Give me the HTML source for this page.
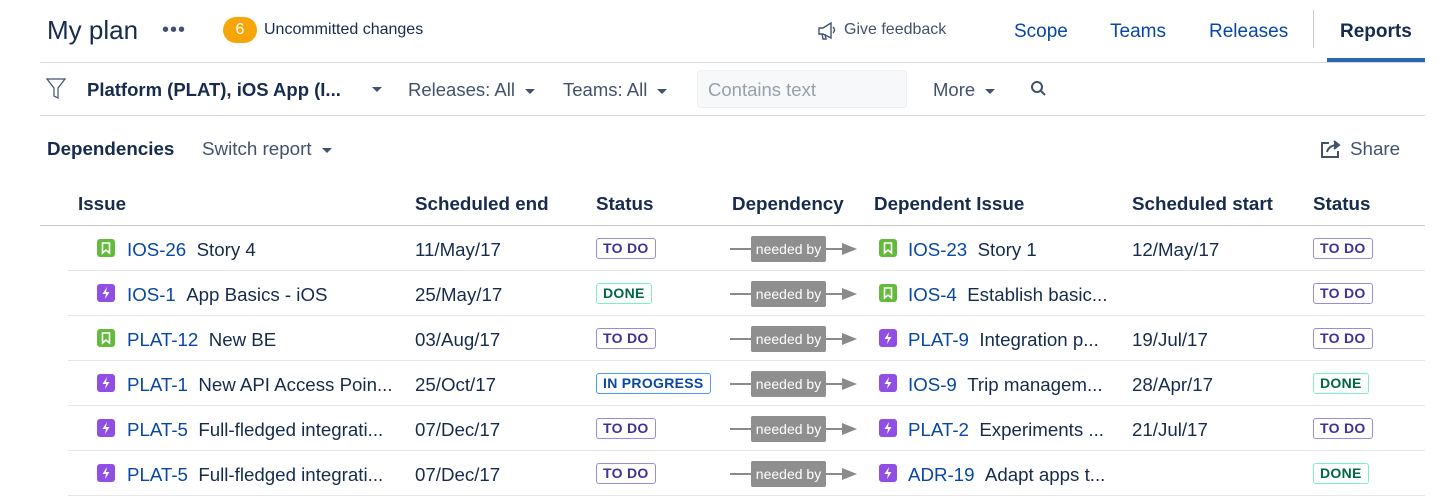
<!DOCTYPE html>
<html><head><meta charset="utf-8"><style>
*{margin:0;padding:0;box-sizing:border-box}
body{width:1456px;height:500px;overflow:hidden;background:#fff;font-family:"Liberation Sans",sans-serif;color:#172b4d;position:relative}
.a{position:absolute;white-space:nowrap}
.line{position:absolute;height:1px;background:#d8d8d8}
.blue{color:#0747a6}
.h{font-weight:bold;font-size:18.8px;color:#172b4d}
.caret{display:inline-block;width:0;height:0;border-left:5px solid transparent;border-right:5px solid transparent;border-top:5px solid #42526e;vertical-align:middle;margin-left:10px}
.loz{position:absolute;font-size:14px;font-weight:bold;border:1px solid;border-radius:3px;padding:1px 6px;line-height:17px;letter-spacing:.3px}
.todo{color:#403294;border-color:#998dd9}
.done{color:#006644;border-color:#79f2c0}
.prog{color:#0747a6;border-color:#4c9aff}
.ic{position:absolute;width:18px;height:18px;border-radius:3px}
.st{background:#63ba3c}
.ep{background:#904ee2}
.dep{position:absolute;width:128px;height:26px}
.t{font-size:18.7px}
</style></head><body>
<div class="a" style="left:47px;top:15px;font-size:26px">My plan</div>
<div class="a" style="left:162px;top:19px;font-size:20px;color:#42526e;letter-spacing:1px">•••</div>
<div class="a" style="left:223px;top:17px;width:34px;height:26px;border-radius:13px;background:#f6a609;color:#fff;font-size:16px;text-align:center;line-height:26px">6</div>
<div class="a" style="left:264px;top:21px;font-size:16px;color:#172b4d">Uncommitted changes</div>
<svg class="a" style="left:817px;top:21px" width="20" height="20" viewBox="0 0 20 20" fill="none" stroke="#42526e" stroke-width="1.4"><path d="M2 7h4l8-5v15l-8-4H2z M5 13l1 5h3l-1-5 M16 6q3 3 0 6"/></svg>
<div class="a" style="left:844px;top:21px;font-size:16px;color:#42526e">Give feedback</div>
<div class="a blue" style="left:1014px;top:21px;font-size:19px">Scope</div>
<div class="a blue" style="left:1110px;top:21px;font-size:19px">Teams</div>
<div class="a blue" style="left:1209px;top:21px;font-size:19px">Releases</div>
<div class="a" style="left:1313px;top:10px;width:1px;height:38px;background:#ccc"></div>
<div class="a" style="left:1340px;top:21px;font-size:19px;font-weight:bold">Reports</div>
<div class="line" style="left:40px;top:62px;width:1385px"></div>
<div class="a" style="left:1327px;top:58px;width:98px;height:4px;background:#2b65b3"></div>

<svg class="a" style="left:46px;top:78px" width="20" height="22" viewBox="0 0 20 22" fill="none" stroke="#42526e" stroke-width="1.2"><path d="M1 1h18l-7 9v10l-4-2v-8z"/></svg>
<div class="a" style="left:87px;top:79px;font-size:18.5px;font-weight:bold">Platform (PLAT), iOS App (I...</div>
<div class="a" style="left:362px;top:80px;height:20px;line-height:20px"><span class="caret"></span></div>
<div class="a" style="left:408px;top:79px;font-size:18.5px;color:#42526e">Releases: All<span class="caret"></span></div>
<div class="a" style="left:563px;top:79px;font-size:18.5px;color:#42526e">Teams: All<span class="caret"></span></div>
<div class="a" style="left:697px;top:70px;width:210px;height:38px;background:#f7f8f9;border:1px solid #eef0f2;border-radius:3px;font-size:18.5px;color:#97a0af;padding:8px 10px">Contains text</div>
<div class="a" style="left:933px;top:79px;font-size:18.5px;color:#42526e">More<span class="caret"></span></div>
<svg class="a" style="left:1030px;top:80px" width="18" height="18" viewBox="0 0 18 18" fill="none" stroke="#42526e" stroke-width="2"><circle cx="7" cy="7" r="5"/><path d="M11 11l4 4"/></svg>
<div class="line" style="left:40px;top:115px;width:1385px"></div>

<div class="a" style="left:47px;top:138px;font-size:18.8px;font-weight:bold">Dependencies</div>
<div class="a" style="left:202px;top:138px;font-size:18.8px;color:#42526e">Switch report<span class="caret"></span></div>
<svg class="a" style="left:1320px;top:139px" width="22" height="20" viewBox="0 0 22 20" fill="none" stroke="#42526e" stroke-width="2"><path d="M9 4H2v14h16v-6"/><path d="M7 13q2-7 11-7" /><path d="M14 2l5 4-5 4" fill="#42526e"/></svg>
<div class="a" style="left:1350px;top:138px;font-size:18.8px;color:#42526e">Share</div>

<div class="a h" style="left:78px;top:193px">Issue</div>
<div class="a h" style="left:415px;top:193px">Scheduled end</div>
<div class="a h" style="left:596px;top:193px">Status</div>
<div class="a h" style="left:732px;top:193px">Dependency</div>
<div class="a h" style="left:874px;top:193px">Dependent Issue</div>
<div class="a h" style="left:1132px;top:193px">Scheduled start</div>
<div class="a h" style="left:1313px;top:193px">Status</div>
<div class="line" style="left:40px;top:225px;width:1385px;background:#c8c8c8"></div>

<div id="rows"></div>
<script>
var R=[
['st','IOS-26','Story 4','11/May/17','todo','TO DO','st','IOS-23','Story 1','12/May/17','todo','TO DO'],
['ep','IOS-1','App Basics - iOS','25/May/17','done','DONE','st','IOS-4','Establish basic...','','todo','TO DO'],
['st','PLAT-12','New BE','03/Aug/17','todo','TO DO','ep','PLAT-9','Integration p...','19/Jul/17','todo','TO DO'],
['ep','PLAT-1','New API Access Poin...','25/Oct/17','prog','IN PROGRESS','ep','IOS-9','Trip managem...','28/Apr/17','done','DONE'],
['ep','PLAT-5','Full-fledged integrati...','07/Dec/17','todo','TO DO','ep','PLAT-2','Experiments ...','21/Jul/17','todo','TO DO'],
['ep','PLAT-5','Full-fledged integrati...','07/Dec/17','todo','TO DO','ep','ADR-19','Adapt apps t...','','done','DONE']];
function icon(t,x,y){var g=t=='st'?'<svg width="18" height="18" viewBox="0 0 18 18"><path d="M5.5 4h7v10l-3.5-3-3.5 3z" fill="none" stroke="#fff" stroke-width="1.6"/></svg>':'<svg width="18" height="18" viewBox="0 0 18 18"><path d="M10 3L5.5 10h3.5l-1 5 4.5-7h-3.5z" fill="#fff"/></svg>';return '<div class="ic '+t+'" style="left:'+x+'px;top:'+y+'px">'+g+'</div>'}
var h='';R.forEach(function(r,i){var c=248+45*i,ty=c-9;
h+=icon(r[0],97,c-9);
h+='<div class="a t" style="left:127px;top:'+ty+'px"><span class="blue">'+r[1]+'</span>&nbsp;&nbsp;'+r[2]+'</div>';
h+='<div class="a t" style="left:415px;top:'+ty+'px">'+r[3]+'</div>';
h+='<div class="loz '+r[4]+'" style="left:596px;top:'+(c-10)+'px">'+r[5]+'</div>';
h+='<svg class="dep" style="left:730px;top:'+(c-12)+'px" viewBox="0 0 128 26"><path d="M0 13h25M95 13h18" stroke="#8a8a8a" stroke-width="2"/><path d="M112 7l15 6-15 6z" fill="#8a8a8a"/><rect x="21" y="0" width="75" height="26" rx="2" fill="#8f8f8f"/><text x="58.5" y="18" text-anchor="middle" font-family="Liberation Sans" font-size="14" fill="#fff">needed by</text></svg>';
h+=icon(r[6],879,c-9);
h+='<div class="a t" style="left:908px;top:'+ty+'px"><span class="blue">'+r[7]+'</span>&nbsp;&nbsp;'+r[8]+'</div>';
h+='<div class="a t" style="left:1132px;top:'+ty+'px">'+r[9]+'</div>';
h+='<div class="loz '+r[10]+'" style="left:1313px;top:'+(c-10)+'px">'+r[11]+'</div>';
h+='<div class="line" style="left:68px;top:'+(c+22)+'px;width:1357px;background:#e6e6e6"></div>';});
document.getElementById('rows').outerHTML=h;
</script>
</body></html>
